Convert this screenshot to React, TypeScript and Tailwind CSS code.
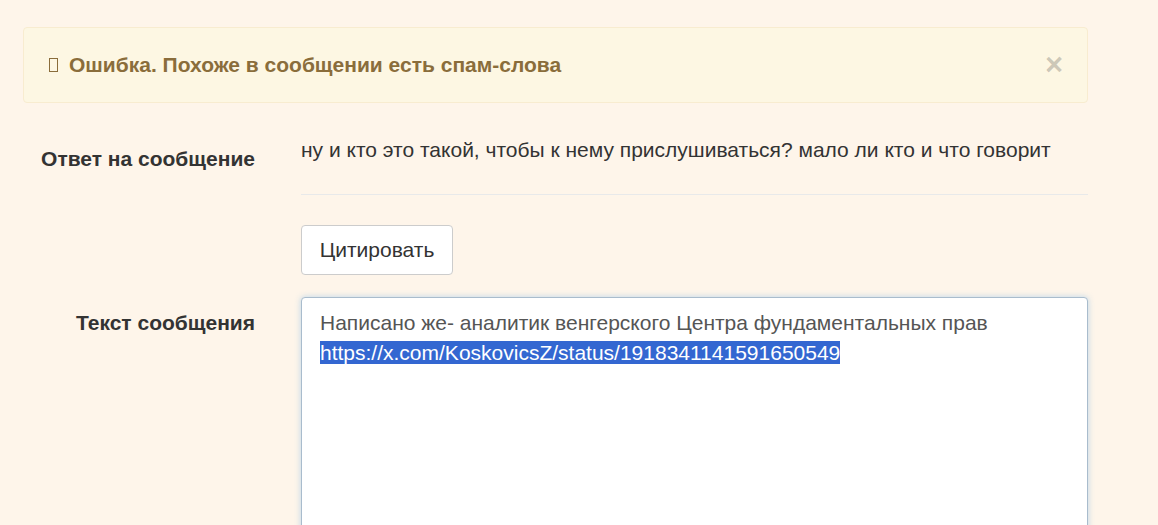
import React from "react";

export default function App() {
  return (
    <div
      className="h-[525px] w-full bg-[#fef5ea] text-[#333] overflow-hidden"
      style={{ fontFamily: '"Liberation Sans", Arial, sans-serif' }}
    >
      <div className="pt-[27px] pl-[23px] w-[1088px]">
        {/* Alert */}
        <div className="h-[76px] bg-[#fdf7e3] border border-[#f8ecd0] rounded-[4px] flex items-center justify-between pl-[25px] pr-[24px]">
          <div className="flex items-center text-[21px] font-bold text-[#8a6d3b]">
            <span className="inline-block w-[9px] h-[14px] border border-[#8a6d3b] mr-[11px]" />
            Ошибка. Похоже в сообщении есть спам-слова
          </div>
          <span className="text-[31px] leading-none font-bold text-black/20 -mt-[1px]">×</span>
        </div>

        {/* Reply row */}
        <div className="flex mt-[33px]">
          <div className="w-[278px] pr-[46px] text-right pt-[9px]">
            <span className="text-[21px] font-bold leading-[28px]">Ответ на сообщение</span>
          </div>
          <div className="flex-1">
            <p className="text-[21px] leading-[28px]">
              ну и кто это такой, чтобы к нему прислушиваться? мало ли кто и что говорит
            </p>
            <div className="h-px bg-[#e8e9ea] mt-[30px]" />
            <button className="mt-[30px] h-[50px] w-[152px] bg-white border border-[#ccc] rounded-[4px] text-[21px] text-[#333]">
              Цитировать
            </button>
          </div>
        </div>

        {/* Text row */}
        <div className="flex mt-[22px]">
          <div className="w-[278px] pr-[46px] text-right pt-[11px]">
            <span className="text-[21px] font-bold leading-[30px]">Текст сообщения</span>
          </div>
          <div className="flex-1">
            <div className="h-[260px] bg-white border border-[#a9bccd] rounded-[4px] shadow-[0_0_6px_rgba(102,175,233,0.45)] pt-[10px] px-[18px] text-[21px] leading-[30px] text-[#555]">
              <div>Написано же- аналитик венгерского Центра фундаментальных прав</div>
              <div>
                <span className="bg-[#3367d1] text-white">https://x.com/KoskovicsZ/status/1918341141591650549</span>
              </div>
            </div>
          </div>
        </div>
      </div>
    </div>
  );
}
